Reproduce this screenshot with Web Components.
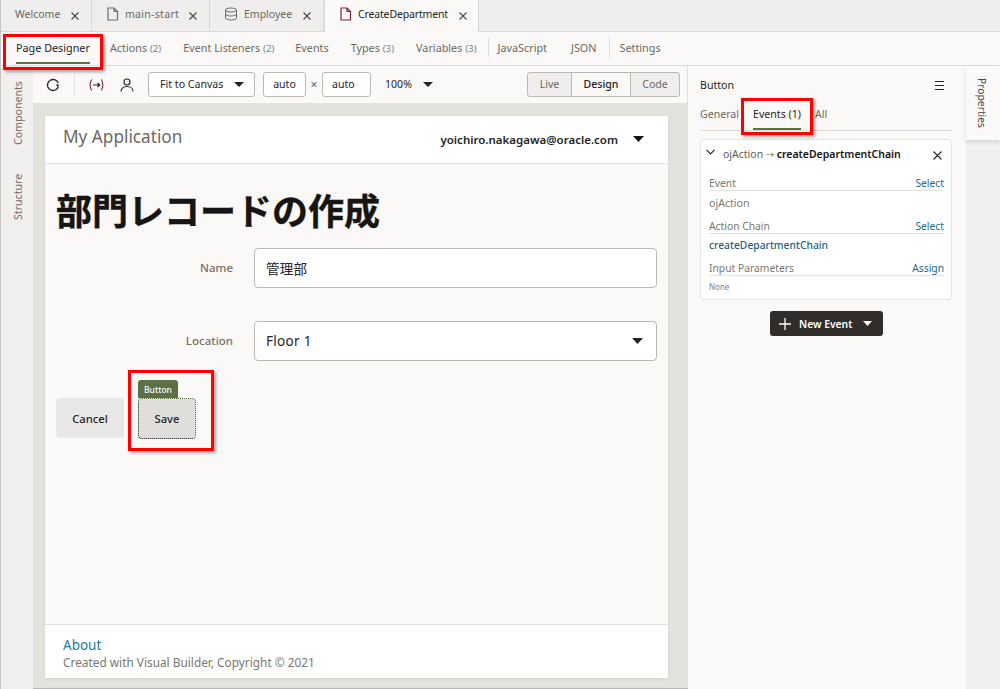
<!DOCTYPE html>
<html lang="en">
<head>
<meta charset="utf-8">
<title>CreateDepartment</title>
<style>
  html, body { margin: 0; height: 100%; }
  body { font-family: "Noto Sans", "Noto Sans CJK JP", sans-serif; color: #161513; background: #faf9f7; overflow: hidden; }
</style>
</head>
<body>
<vb-app>
  <vb-tabs slot="tabs">
    <vb-tab label="Welcome" w="91" xm="11"></vb-tab>
    <vb-tab label="main-start" icon="file" w="118" xm="10" style="letter-spacing:.3px"></vb-tab>
    <vb-tab label="Employee" icon="db" w="115" xm="11"></vb-tab>
    <vb-tab label="CreateDepartment" icon="file" w="155" xm="11" active style="letter-spacing:-.15px"></vb-tab>
  </vb-tabs>
  <vb-subnav slot="subnav"></vb-subnav>
  <vb-rail slot="left" side="left"></vb-rail>
  <vb-toolbar slot="toolbar"></vb-toolbar>
  <vb-preview slot="canvas"></vb-preview>
  <vb-props slot="props"></vb-props>
  <vb-rail slot="right" side="right"></vb-rail>
  <vb-callout slot="over" style="left:3px;top:34px;width:100px;height:36px"></vb-callout>
  <vb-callout slot="over" style="left:741px;top:98px;width:72px;height:37px"></vb-callout>
  <vb-callout slot="over" style="left:128px;top:370px;width:86px;height:81px"></vb-callout>
</vb-app>

<script>
(function () {
  const icons = {
    file: `<svg width="13" height="14" viewBox="0 0 13 14" fill="none" stroke="currentColor" stroke-width="1.2"><path d="M2 1h6l3.5 3.5V13H2zM8 1v3.5h3.5"/></svg>`,
    db: `<svg width="14" height="14" viewBox="0 0 14 14" fill="none" stroke="currentColor" stroke-width="1"><ellipse cx="7" cy="3" rx="5.5" ry="2"/><path d="M1.5 3v8c0 1.1 2.5 2 5.5 2s5.500-.9 5.500-2V3M1.500 7c0 1.100 2.500 2 5.500 2s5.500-.9 5.500-2"/></svg>`,
    close: `<svg width="8" height="8" viewBox="0 0 8 8" stroke="currentColor" stroke-width="1.1"><path d="M.5.5l7 7M7.500.5l-7 7"/></svg>`,
    caret: `<svg width="10" height="5" viewBox="0 0 10 5" fill="currentColor"><path d="M0 0h10L5 5z"/></svg>`,
    caretBig: `<svg width="11" height="6" viewBox="0 0 11 6" fill="currentColor"><path d="M0 0h11L5.500 6z"/></svg>`,
  };

  class VbApp extends HTMLElement {
    constructor() {
      super();
      this.attachShadow({ mode: "open" }).innerHTML = `
        <style>
          :host { display: grid; position: relative; width: 1000px; height: 689px; overflow: hidden;
            grid-template-columns: 33px 655px 278px 34px; grid-template-rows: 32px 34px 37px 1fr; background: #faf9f7; }
          .tabs { grid-column: 1 / -1; }
          .subnav { grid-column: 1 / -1; }
          .left { grid-row: 3 / 5; }
          .props { grid-column: 3; grid-row: 3 / 5; }
          .right { grid-column: 4; grid-row: 3 / 5; }
        </style>
        <div class="tabs"><slot name="tabs"></slot></div>
        <div class="subnav"><slot name="subnav"></slot></div>
        <div class="left"><slot name="left"></slot></div>
        <div class="toolbar"><slot name="toolbar"></slot></div>
        <div class="props"><slot name="props"></slot></div>
        <div class="right"><slot name="right"></slot></div>
        <div class="canvas" style="grid-column:2;grid-row:4;min-height:0"><slot name="canvas"></slot></div>
        <slot name="over"></slot>`;
    }
  }

  class VbTabs extends HTMLElement {
    constructor() {
      super();
      this.attachShadow({ mode: "open" }).innerHTML = `
        <style>
          :host { display: flex; height: 32px; box-sizing: border-box; background: #efeeec;
            border-bottom: 1px solid #d9d7d3; border-left: 1px solid #c9c7c3; }
        </style><slot></slot>`;
    }
  }

  class VbTab extends HTMLElement {
    constructor() {
      super();
      const icon = this.getAttribute("icon");
      const active = this.hasAttribute("active");
      this.attachShadow({ mode: "open" }).innerHTML = `
        <style>
          :host { display: flex; align-items: center; box-sizing: border-box; height: 31px; flex: none;
            padding: 0 0 3px 14px; font-size: 10.500px; color: #6b6862; border-right: 1px solid #d9d7d3; }
          :host([active]) { background: #faf9f7; color: #26241f; height: 32px; padding-bottom: 4px; border-left: 1px solid #d9d7d3; margin-left: -1px; box-shadow: -1px 0 2px rgba(0,0,0,.06); }
          .ic { display: flex; margin-right: 6px; color: ${active ? "#7a2348" : "#6f6c66"}; }
          .x { display: flex; margin-left: ${this.getAttribute("xm")}px; margin-top: 3px; color: #4a4843; }
        </style>
        ${icon ? `<span class="ic">${icons[icon]}</span>` : ""}
        <span>${this.getAttribute("label")}</span>
        <span class="x">${icons.close}</span>`;
      this.style.width = this.getAttribute("w") + "px";
    }
  }

  class VbSubnav extends HTMLElement {
    constructor() {
      super();
      const items = [
        ["Page Designer", "", 15, true],
        ["Actions", "(2)", 20],
        ["Event Listeners", "(2)", 22],
        ["Events", "", 21],
        ["Types", "(3)", 22],
        ["Variables", "(3)", 22],
      ];
      const html = items.map(([t, n, m, on]) =>
        `<span class="i${on ? " on" : ""}" style="margin-left:${m}px">${t}${n ? ` <small>${n}</small>` : ""}</span>`).join("");
      this.attachShadow({ mode: "open" }).innerHTML = `
        <style>
          :host { display: flex; align-items: center; box-sizing: border-box; height: 34px; padding-bottom: 2px; font-size: 10.800px; color: #6b6862;
            background: #faf9f7; border-bottom: 1px solid #dedcd8; border-left: 1px solid #c9c7c3; }
          .i { position: relative; white-space: nowrap; }
          small { font-size: 9.700px; color: #85827c; }
          .on { color: #26241f; }
          .on::after { content: ""; position: absolute; left: 0; right: 0; bottom: -9px; height: 2px; background: #5b7044; }
          .sep { width: 1px; height: 19px; background: #dedcd8; }
        </style>
        ${html}
        <span class="sep" style="margin-left:11px"></span>
        <span class="i" style="margin-left:9px">JavaScript</span>
        <span class="i" style="margin-left:24px">JSON</span>
        <span class="sep" style="margin-left:12px"></span>
        <span class="i" style="margin-left:10px">Settings</span>`;
    }
  }

  class VbRail extends HTMLElement {
    constructor() {
      super();
      const left = this.getAttribute("side") === "left";
      this.attachShadow({ mode: "open" }).innerHTML = `
        <style>
          :host { display: flex; flex-direction: column; box-sizing: border-box; height: 100%; background: #f1f0ee; font-size: 10.600px; color: #7b6a66; }
          :host([side=left]) { border-left: 1px solid #c9c7c3; align-items: center; padding: 14px 0 0 1px; gap: 27px; width: 33px; }
          :host([side=right]) { width: 34px; }
          .t { writing-mode: vertical-rl; transform: rotate(180deg); height: 65px; line-height: 14px; text-align: left; }
          .p { writing-mode: vertical-rl; box-sizing: border-box; height: 74px; background: #faf9f7; width: 34px; color: #4a4843; font-size: 10.300px;
            display: flex; align-items: center; padding: 12px 2px 0 0; box-shadow: 0 2px 4px rgba(0,0,0,.12); }
        </style>
        ${left ? `<span class="t">Components</span><span class="t" style="height:48px">Structure</span>`
               : `<span class="p">Properties</span>`}`;
    }
  }

  class VbToolbar extends HTMLElement {
    constructor() {
      super();
      this.attachShadow({ mode: "open" }).innerHTML = `
        <style>
          :host { display: flex; align-items: center; box-sizing: border-box; height: 37px; font-size: 10.600px; padding: 0 8px 0 13px; color: #26241f; background: #faf9f7; }
          .ic { display: flex; flex: none; }
          .sep { width: 1px; height: 23px; background: #e4e2dd; margin: 0 14px 0 14px; }
          .box { display: flex; align-items: center; box-sizing: border-box; height: 25px; background: #fff; border: 1px solid #bcb9b3; border-radius: 3px; padding: 0 8px 1px; }
          .pct { margin-left: 14px; display: flex; align-items: center; gap: 11px; padding-bottom: 1px; }
          .seg { display: flex; margin-left: auto; height: 25px; box-sizing: border-box; border: 1px solid #bcb9b3; border-radius: 3px; background: #efeeec; color: #6b6862; }
          .seg span { display: flex; align-items: center; justify-content: center; box-sizing: border-box; padding-bottom: 1px; }
          .seg .d { background: #faf9f7; color: #26241f; font-weight: 500; border: solid #bcb9b3; border-width: 0 1px; width: 60px; }
        </style>
        <svg class="ic" width="14" height="14" viewBox="0 0 14 14" fill="none" stroke="#26241f" stroke-width="1.3"><path d="M12.300 8.500A5.500 5.500 0 1 1 8.500 1.700 5.500 5.500 0 0 1 12.200 5"/><path d="M13.400 6.600H9.800l1.800 2.200z" fill="#26241f" stroke="none"/></svg>
        <span class="sep"></span>
        <svg class="ic" width="15" height="14" viewBox="0 0 15 14" fill="none" stroke="#7a2348" stroke-width="1.1"><path d="M2.700 1.500C.6 4.500.6 9.500 2.700 12.500M12.300 1.500c2.100 3 2.100 8 0 11"/><path d="M4 7h6.500M8.500 5l2.300 2-2.300 2" stroke="#26241f"/></svg>
        <svg class="ic" style="margin-left:16px" width="14" height="14" viewBox="0 0 14 14" fill="none" stroke="#26241f" stroke-width="1.1"><circle cx="7" cy="4" r="3"/><path d="M1 13.500c0-3 2.500-5 6-5s6 2 6 5"/></svg>
        <span class="box" style="width:107px;margin-left:14px;padding-left:11px;justify-content:space-between;padding-right:10px"><span>Fit to Canvas</span>${icons.caret}</span>
        <span class="box" style="width:43px;margin-left:8px;justify-content:center">auto</span>
        <span style="width:16px;text-align:center;color:#6b6862;font-size:12px">×</span>
        <span class="box" style="width:49px;padding-left:9px">auto</span>
        <span class="pct">100% ${icons.caret}</span>
        <span class="seg"><span style="width:43px">Live</span><span class="d">Design</span><span style="width:48px">Code</span></span>`;
    }
  }

  class VbPreview extends HTMLElement {
    constructor() {
      super();
      this.attachShadow({ mode: "open" }).innerHTML = `
        <style>
          :host { display: flex; box-sizing: border-box; height: 586px; background: #e4e2dd; padding: 13px 20px 10px 12px; border-bottom: 1px solid #b9b7b3; }
          .page { flex: 1; display: flex; flex-direction: column; background: #faf9f7; box-shadow: 0 1px 3px rgba(0,0,0,.08); }
          header { display: flex; align-items: center; box-sizing: border-box; height: 48px; flex: none; padding: 0 0 0 18px; background: #fff; border-bottom: 1px solid #e4e2dd; }
          .app { font-size: 17.200px; color: #6b6862; padding-bottom: 6px; }
          .user { margin-left: auto; font-size: 11.500px; font-weight: 600; color: #26241f; }
          .car { display: flex; margin: 0 24px 0 15px; padding-bottom: 1px; color: #161513; }
          h1 { margin: 23px 0 0 11px; font: 700 36px/44px "Noto Sans CJK JP", sans-serif; color: #161513; -webkit-text-stroke: .4px #161513; }
          main { flex: 1; }
          .btns { display: flex; align-items: flex-start; margin: 37px 0 0 11px; }
          footer { flex: none; box-sizing: border-box; height: 54px; padding: 11px 18px 0; background: #fff; border-top: 1px solid #e4e2dd; }
          .about { font-size: 13.500px; line-height: 18px; color: #1f7a9c; }
          .copy { font-size: 11.850px; line-height: 16px; color: #7a7770; }
        </style>
        <div class="page">
          <header>
            <span class="app">My Application</span>
            <span class="user">yoichiro.nakagawa@oracle.com</span>
            <span class="car">${icons.caretBig}</span>
          </header>
          <main>
            <h1>部門レコードの作成</h1>
            <vb-field label="Name" value="管理部" style="margin-top:17px"></vb-field>
            <vb-field label="Location" value="Floor 1" select style="margin-top:33px"></vb-field>
            <div class="btns">
              <vb-button>Cancel</vb-button>
              <vb-button selected style="margin-left:14px">Save</vb-button>
            </div>
          </main>
          <footer>
            <div class="about">About</div>
            <div class="copy">Created with Visual Builder, Copyright © 2021</div>
          </footer>
        </div>`;
    }
  }

  class VbField extends HTMLElement {
    constructor() {
      super();
      this.attachShadow({ mode: "open" }).innerHTML = `
        <style>
          :host { display: flex; align-items: center; padding-right: 11px; }
          label { width: 188px; flex: none; padding-bottom: 1px; text-align: right; font-size: 11.500px; font-weight: 500; color: #7a6f60; }
          .in { flex: 1; display: flex; align-items: center; justify-content: space-between; box-sizing: border-box; height: 40px;
            margin-left: 21px; padding: 0 13px 0 11px; background: #fff; border: 1px solid #bcb9b3; border-radius: 4px;
            font-size: 13.500px; color: #26241f; letter-spacing: .3px; }
        </style>
        <label>${this.getAttribute("label")}</label>
        <div class="in"><span>${this.getAttribute("value")}</span>${this.hasAttribute("select") ? icons.caretBig : ""}</div>`;
    }
  }

  class VbButton extends HTMLElement {
    constructor() {
      super();
      this.attachShadow({ mode: "open" }).innerHTML = `
        <style>
          :host { display: inline-flex; position: relative; align-items: center; justify-content: center; box-sizing: border-box;
            width: 68px; height: 40px; border-radius: 4px; background: #e9e8e6; font-size: 11.200px; font-weight: 500; color: #26241f; }
          :host([selected]) { width: 58px; height: 41px; background: #dfdedb; border: 1px dotted #161513; border-top-color: #5b7044; border-right-color: #5b7044; }
          .tag { position: absolute; left: -1px; top: -19px; height: 18px; width: 40px; box-sizing: border-box; border-radius: 3px 3px 0 0;
            background: #5b7044; color: #fff; font-size: 8.500px; display: flex; align-items: center; justify-content: center; }
        </style>
        ${this.hasAttribute("selected") ? `<span class="tag">Button</span>` : ""}
        <slot></slot>`;
    }
  }

  class VbProps extends HTMLElement {
    constructor() {
      super();
      this.attachShadow({ mode: "open" }).innerHTML = `
        <style>
          :host { display: block; box-sizing: border-box; height: 100%; background: #faf9f7; border-left: 1px solid #e0ded9; padding: 0 12px; font-size: 10.600px; color: #6b6862; margin-left: -1px; width: 279px; }
          .top { display: flex; align-items: center; justify-content: space-between; box-sizing: border-box; height: 36px; color: #26241f; padding: 2px 10px 0 0; }
          .menu { width: 9px; height: 9px; border-top: 1px solid #26241f; border-bottom: 1px solid #26241f; position: relative; box-sizing: border-box; }
          .menu::after { content: ""; position: absolute; left: 0; right: 0; top: 3px; height: 1px; background: #26241f; }
          .tabs { display: flex; box-sizing: border-box; height: 29px; border-bottom: 1px solid #dedcd8; margin-right: 2px; line-height: 24px; }
          .tabs span { display: block; position: relative; }
          .tabs .on { color: #26241f; margin: 0 14px; }
          .on::after { content: ""; position: absolute; left: 0; right: 0; top: 26px; height: 2px; background: #5b7044; }
          .new { display: flex; align-items: center; box-sizing: border-box; width: 113px; height: 25px; margin: 11px 0 0 70px; padding-left: 9px; background: #312d2a; border-radius: 3px; color: #fff; font-weight: 600; font-size: 10.300px; }
          .new span:nth-child(2) { margin-left: 8px; }
          .new .c { display: flex; margin-left: 11px; }
        </style>
        <div class="top"><span>Button</span><span class="menu"></span></div>
        <div class="tabs"><span>General</span><span class="on">Events (1)</span><span>All</span></div>
        <vb-event-card></vb-event-card>
        <div class="new">
          <svg width="12" height="12" viewBox="0 0 12 12" stroke="#fff" stroke-width="1.300"><path d="M6 0v12M0 6h12"/></svg>
          <span>New Event</span>
          <span class="c"><svg width="9" height="5" viewBox="0 0 9 5" fill="#fff"><path d="M0 0h9L4.500 5z"/></svg></span>
        </div>`;
    }
  }

  class VbEventCard extends HTMLElement {
    constructor() {
      super();
      const row = (a, b) => `<div class="row"><span>${a}</span><a>${b}</a></div>`;
      this.attachShadow({ mode: "open" }).innerHTML = `
        <style>
          :host { display: block; box-sizing: border-box; width: 252px; height: 161px; margin-top: 8px; background: #fff; border: 1px solid #e6e4e0; border-radius: 4px; padding: 0 7px 0 8px; font-size: 10.300px; color: #7a7770; }
          .head { display: flex; align-items: center; box-sizing: border-box; height: 35px; padding-bottom: 7px; margin-left: -3px; font-size: 10.500px; color: #5f5c56; }
          .head b { font-weight: 600; color: #161513; }
          .arrow { font-size: 8px; }
          .head .x { display: flex; margin-left: auto; margin-right: 2px; margin-top: 3px; color: #26241f; }
          .row { display: flex; justify-content: space-between; align-items: flex-end; height: 15px; line-height: 14px; border-bottom: 1px solid #e4e2dd; }
          a { color: #1f6a88; }
          .val { height: 27px; line-height: 25px; font-size: 10.600px; }
          .link { color: #1f5f7f; font-weight: 500; height: 26px; line-height: 22px; }
          .none { font-size: 8px; line-height: 22px; color: #85827c; }
        </style>
        <div class="head">
          <svg width="9" height="6" viewBox="0 0 9 6" fill="none" stroke="#26241f" stroke-width="1.200" style="margin-right:8px;margin-bottom:4px"><path d="M.5.800l4 4 4-4"/></svg>
          <span>ojAction <span class="arrow">→</span> <b>createDepartmentChain</b></span>
          <span class="x"><svg width="9" height="9" viewBox="0 0 9 9" stroke="currentColor" stroke-width="1.100"><path d="M.5.500l8 8M8.500.500l-8 8"/></svg></span>
        </div>
        ${row("Event", "Select")}
        <div class="val">ojAction</div>
        ${row("Action Chain", "Select")}
        <div class="link">createDepartmentChain</div>
        ${row("Input Parameters", "Assign")}
        <div class="none">None</div>`;
    }
  }

  class VbCallout extends HTMLElement {
    constructor() {
      super();
      this.attachShadow({ mode: "open" }).innerHTML = `
        <style>
          :host { display: block; position: absolute; box-sizing: border-box; border: 3px solid #f00; box-shadow: 2px 2px 3px rgba(0,0,0,.35); pointer-events: none; }
        </style>`;
    }
  }

  customElements.define("vb-app", VbApp);
  customElements.define("vb-tabs", VbTabs);
  customElements.define("vb-tab", VbTab);
  customElements.define("vb-subnav", VbSubnav);
  customElements.define("vb-rail", VbRail);
  customElements.define("vb-toolbar", VbToolbar);
  customElements.define("vb-preview", VbPreview);
  customElements.define("vb-field", VbField);
  customElements.define("vb-button", VbButton);
  customElements.define("vb-props", VbProps);
  customElements.define("vb-event-card", VbEventCard);
  customElements.define("vb-callout", VbCallout);
})();
</script>
</body>
</html>
